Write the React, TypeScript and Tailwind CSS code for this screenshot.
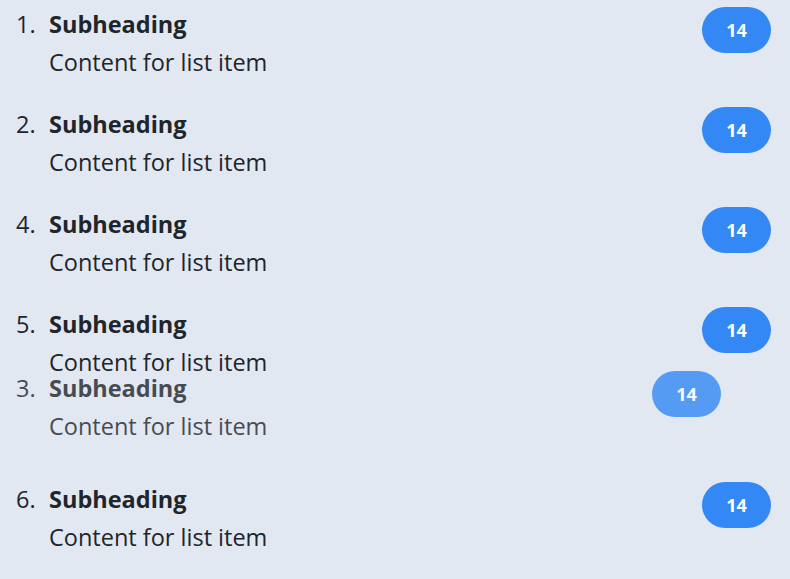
import React from "react";

type Item = { n: number };

function Row({ n }: Item) {
  return (
    <div className="flex h-[100px] items-start justify-between pl-[16px] pr-[19px]">
      <div className="flex pt-[7px]">
        <span className="w-[33px] leading-[34px]">{n}.</span>
        <div>
          <div className="font-bold leading-[34px]">Subheading</div>
          <div className="mt-[4px] leading-[34px]">Content for list item</div>
        </div>
      </div>
      <span className="mt-[7px] flex h-[46px] w-[69px] items-center justify-center rounded-full bg-[#3388f5] text-[18px] font-bold text-white">
        14
      </span>
    </div>
  );
}

export default function App() {
  return (
    <div
      className="relative min-h-screen bg-[#e2e8f2] text-[23.5px] text-[#212529]"
      style={{ fontFamily: "'Open Sans', sans-serif" }}
    >
      <Row n={1} />
      <Row n={2} />
      <Row n={4} />
      <Row n={5} />
      <div className="h-[75px]" />
      <Row n={6} />
      <div className="absolute left-0 top-[364px] w-[740px] opacity-80">
        <Row n={3} />
      </div>
    </div>
  );
}
